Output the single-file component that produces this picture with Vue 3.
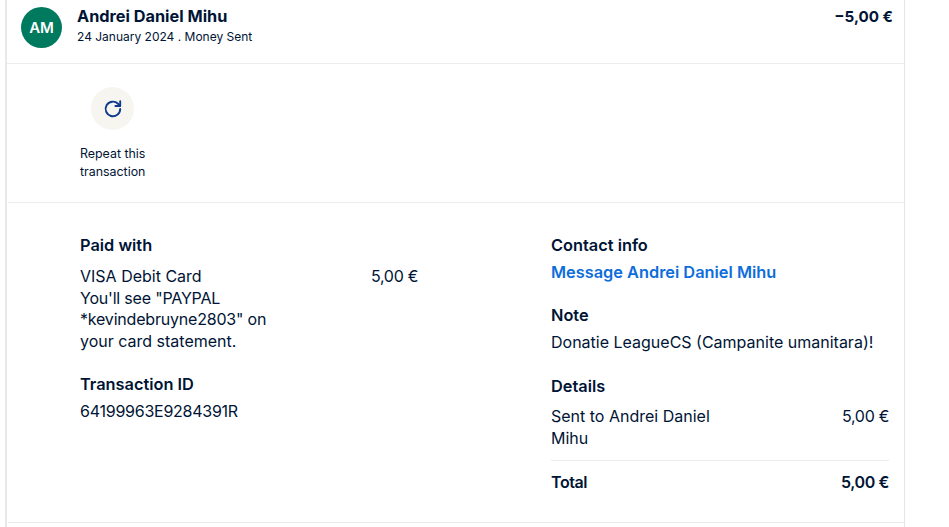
<template>
  <div class="card">
    <!-- Header row -->
    <div class="header">
      <div class="avatar">AM</div>
      <div class="who">
        <div class="name">Andrei Daniel Mihu</div>
        <div class="sub">24 January 2024 . Money Sent</div>
      </div>
      <div class="amount">−5,00 €</div>
    </div>

    <!-- Actions -->
    <div class="actions">
      <div class="action">
        <div class="action-icon">
          <svg width="20" height="20" viewBox="0 0 20 20" fill="none">
            <path d="M17.2 10a7.3 7.3 0 1 1-2.2-5.3l2 2" stroke="#0d3a8c" stroke-width="1.9" stroke-linecap="round" stroke-linejoin="round" />
            <path d="M17.2 2.2v4.8h-4.8" stroke="#0d3a8c" stroke-width="1.9" stroke-linecap="round" stroke-linejoin="round" />
          </svg>
        </div>
        <div class="action-label">Repeat this<br />transaction</div>
      </div>
    </div>

    <!-- Details -->
    <div class="details">
      <div class="col-left">
        <h3>Paid with</h3>
        <div class="paid-row">
          <div class="paid-text">
            VISA Debit Card<br />
            <span class="tight">You'll see "PAYPAL *kevindebruyne2803" on</span> your card statement.
          </div>
          <div class="money">5,00 €</div>
        </div>
        <h3 class="tx-title">Transaction ID</h3>
        <div class="tx-id">64199963E9284391R</div>
      </div>

      <div class="col-right">
        <h3>Contact info</h3>
        <a class="link">Message Andrei Daniel Mihu</a>
        <h3 class="note-title">Note</h3>
        <div class="note">Donatie LeagueCS (Campanite umanitara)!</div>
        <h3 class="details-title">Details</h3>
        <div class="line-row">
          <div class="line-name">Sent to Andrei Daniel Mihu</div>
          <div class="money">5,00 €</div>
        </div>
        <div class="total-row">
          <div>Total</div>
          <div>5,00 €</div>
        </div>
      </div>
    </div>
  </div>
</template>

<script setup>
</script>

<style scoped>
.card {
  box-sizing: border-box;
  width: 900px;
  height: 527px;
  margin-left: 5px;
  background: #fff;
  border-left: 2px solid #e8e8e8;
  border-right: 1px solid #e6e6e6;
  color: #001435;
  font-family: Inter, "Liberation Sans", sans-serif;
  font-size: 16px;
  line-height: 21.7px;
}

.header {
  display: flex;
  height: 64px;
  box-sizing: border-box;
  padding: 7px 11px 0 14px;
  border-bottom: 1px solid #ececec;
}

.avatar {
  width: 41px;
  height: 41px;
  border-radius: 50%;
  background: #007a5e;
  color: #fff;
  font-size: 15px;
  font-weight: 600;
  line-height: 41px;
  text-align: center;
}

.who {
  flex: 1;
  margin-left: 15px;
}

.name {
  font-size: 16.3px;
  font-weight: 700;
  line-height: 19px;
}

.sub {
  margin-top: 1px;
  font-size: 12px;
  line-height: 20px;
}

.amount {
  font-size: 15.2px;
  font-weight: 700;
  line-height: 19px;
}

.actions {
  height: 139px;
  box-sizing: border-box;
  margin-left: 1px;
  padding: 23px 0 0 72px;
  border-bottom: 1px solid #ececec;
}

.action {
  width: 65px;
}

.action-icon {
  display: flex;
  align-items: center;
  justify-content: center;
  width: 43px;
  height: 43px;
  margin: 0 auto;
  border-radius: 50%;
  background: #f7f5f0;
}

.action-label {
  margin-top: 15px;
  font-size: 12.4px;
  line-height: 18px;
  white-space: nowrap;
}

.details {
  display: flex;
  height: 320px;
  box-sizing: border-box;
  margin-left: 1px;
  padding: 32px 15px 0 72px;
  border-bottom: 1px solid #ebebe8;
}

h3 {
  margin: 0;
  font-size: 16.35px;
  font-weight: 600;
  line-height: 21px;
}

.col-left {
  width: 338px;
}

.col-right {
  flex: 1;
  margin-left: 133px;
}

.paid-row {
  display: flex;
  justify-content: space-between;
  margin-top: 10px;
}

.paid-text {
  width: 200px;
}

.tight {
  letter-spacing: -0.2px;
}

.money {
  letter-spacing: -0.3px;
}

.tx-title {
  margin-top: 21px;
}

.tx-id {
  margin-top: 6px;
  letter-spacing: -0.25px;
}

.link {
  display: block;
  margin-top: 6px;
  color: #0d6ddb;
  font-size: 16.35px;
  font-weight: 600;
}

.note-title {
  margin-top: 21px;
}

.note {
  margin-top: 6px;
}

.details-title {
  margin-top: 23px;
}

.line-row {
  display: flex;
  justify-content: space-between;
  margin-top: 9px;
  padding-bottom: 10px;
  border-bottom: 1px solid #ebebe8;
}

.line-name {
  width: 190px;
}

.total-row {
  display: flex;
  justify-content: space-between;
  margin-top: 11px;
  font-weight: 600;
  letter-spacing: -0.4px;
}
</style>

<style>
body {
  background: #fff;
}
</style>
